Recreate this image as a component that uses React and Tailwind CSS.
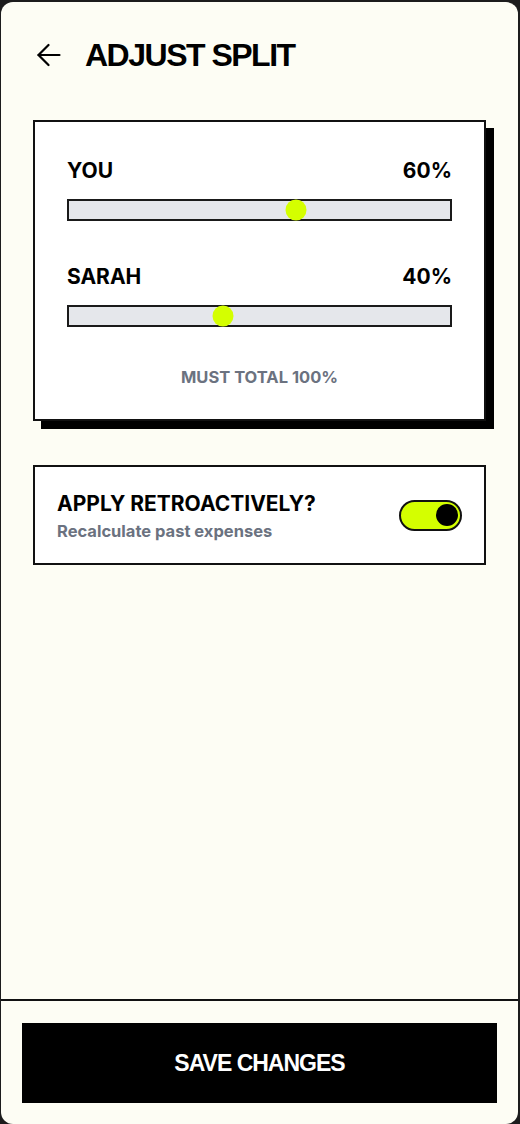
const shares = [
  { name: "YOU", value: 60 },
  { name: "SARAH", value: 40 },
];

function BackArrow() {
  return (
    <svg width="24" height="24" viewBox="0 0 24 24" fill="none" stroke="black" strokeWidth="2.2" strokeLinecap="round" strokeLinejoin="round">
      <path d="M22.5 12H1.5" />
      <path d="M11.5 2 1.5 12l10 10" />
    </svg>
  );
}

function SplitSlider({ name, value, first }) {
  // thumb travels inside the track, so its centre runs from 10px to (width - 10px)
  const left = `calc(${value}% - ${value * 0.2}px + 10px)`;
  return (
    <div className={first ? "" : "mt-[44px]"}>
      <div className="flex h-6 items-center justify-between font-['Inter',sans-serif] text-[21px] font-bold leading-6 text-black">
        <span>{name}</span>
        <span>{value}%</span>
      </div>
      <div className="relative mt-4 h-[22px] border-2 border-[#1a1a1a] bg-[#e5e7eb]">
        <div
          className="absolute top-1/2 h-[21px] w-[21px] -translate-x-1/2 -translate-y-1/2 rounded-full bg-[#d4ff00]"
          style={{ left }}
        />
      </div>
    </div>
  );
}

export default function App() {
  return (
    <div className="h-[1124px] w-[520px] bg-[#1c1c1c] pt-[2px] pl-[1px] pr-[2px] font-['Inter',sans-serif]">
      <div className="flex h-[1122px] flex-col rounded-[12px] bg-[#fdfdf4]">
        <header className="mt-[33px] flex h-10 items-center pl-[36px]">
          <BackArrow />
          <h1 className="ml-[24px] font-['Liberation_Sans',Arial,sans-serif] text-[32px] font-bold tracking-[-1.5px] text-black">
            ADJUST SPLIT
          </h1>
        </header>

        <div className="mx-[32px] mt-[45px] border-2 border-[#111] bg-white px-8 pt-[37px] pb-[32px] shadow-[8px_8px_0_0_#000]">
          {shares.map((share, index) => (
            <SplitSlider key={share.name} name={share.name} value={share.value} first={index === 0} />
          ))}
          <p className="mt-10 text-center text-[16.5px] font-bold leading-5 text-[#6b7280]">MUST TOTAL 100%</p>
        </div>

        <div className="mx-[32px] mt-[44px] flex h-[100px] items-center justify-between border-2 border-[#111] bg-white px-[22px]">
          <div className="pt-[2px]">
            <p className="text-[21px] font-bold leading-6 text-black">APPLY RETROACTIVELY?</p>
            <p className="mt-[5px] text-[16.5px] font-bold leading-5 text-[#6b7280]">Recalculate past expenses</p>
          </div>
          <div className="flex h-[31px] w-[63px] items-center justify-end rounded-full border-2 border-[#111] bg-[#d4ff00] pr-[2px]">
            <div className="h-[22px] w-[22px] rounded-full bg-black" />
          </div>
        </div>

        <div className="flex-1" />

        <footer className="border-t-2 border-[#111] px-[21px] pt-[22px] pb-[21px]">
          <button className="flex h-20 w-full items-center justify-center bg-black font-['Liberation_Sans',Arial,sans-serif] text-[23px] font-bold tracking-[-1px] text-white">
            SAVE CHANGES
          </button>
        </footer>
      </div>
    </div>
  );
}
